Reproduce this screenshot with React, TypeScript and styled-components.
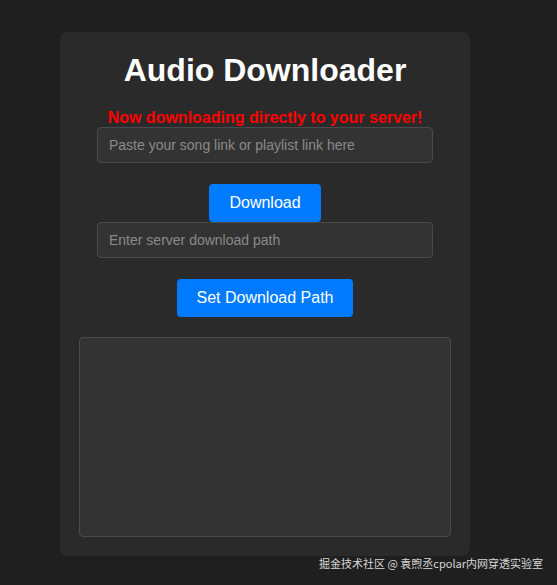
import React from "react";
import styled, { createGlobalStyle } from "styled-components";

const Global = createGlobalStyle`
  html, body { margin: 0; padding: 0; background: #1f1f1f; }
  body { font-family: "Liberation Sans", Arial, sans-serif; width: 557px; height: 585px; overflow: hidden; }
`;

const Page = styled.div`
  position: relative;
  width: 557px;
  height: 585px;
  padding: 32px 0 0 60px;
  box-sizing: border-box;
`;

const Card = styled.div`
  width: 410px;
  height: 524px;
  box-sizing: border-box;
  background: #2a2a2a;
  border-radius: 8px;
  padding: 20px 19px;
  display: flex;
  flex-direction: column;
  align-items: center;
`;

const Title = styled.h1`
  margin: 0;
  font-size: 32px;
  font-weight: bold;
  color: #ffffff;
  line-height: 37px;
`;

const Notice = styled.p`
  margin: 20px 0 0;
  color: #ff0000;
  font-weight: bold;
  font-size: 16px;
  line-height: 18px;
`;

const Input = styled.input`
  flex-shrink: 0;
  width: 336px;
  height: 36px;
  box-sizing: border-box;
  background: #333333;
  border: 1px solid #4a4a4a;
  border-radius: 4px;
  padding: 0 11px;
  color: #ddd;
  font-family: "Liberation Sans", Arial, sans-serif;
  font-size: 14px;
  outline: none;
  &::placeholder { color: #8a8a8a; }
`;

const Button = styled.button<{ $w: number }>`
  flex-shrink: 0;
  width: ${p => p.$w}px;
  height: 38px;
  margin-top: 21px;
  background: #007bff;
  color: #fff;
  border: none;
  border-radius: 4px;
  font-family: "Liberation Sans", Arial, sans-serif;
  font-size: 16px;
  cursor: pointer;
`;

const Output = styled.textarea`
  flex-shrink: 0;
  margin-top: 20px;
  width: 372px;
  height: 200px;
  box-sizing: border-box;
  background: #333333;
  border: 1px solid #4a4a4a;
  border-radius: 4px;
  resize: none;
  outline: none;
`;

const Watermark = styled.div`
  position: absolute;
  right: 14px;
  bottom: 15px;
  font-family: "Noto Sans CJK SC", "Noto Sans", sans-serif;
  font-size: 11px;
  color: #d8d8d8;
  line-height: 14px;
`;

export default function App() {
  return (
    <>
      <Global />
      <Page>
        <Card>
          <Title>Audio Downloader</Title>
          <Notice>Now downloading directly to your server!</Notice>
          <Input placeholder="Paste your song link or playlist link here" />
          <Button $w={112}>Download</Button>
          <Input placeholder="Enter server download path" />
          <Button $w={176}>Set Download Path</Button>
          <Output />
        </Card>
        <Watermark>掘金技术社区 @ 袁煦丞cpolar内网穿透实验室</Watermark>
      </Page>
    </>
  );
}
